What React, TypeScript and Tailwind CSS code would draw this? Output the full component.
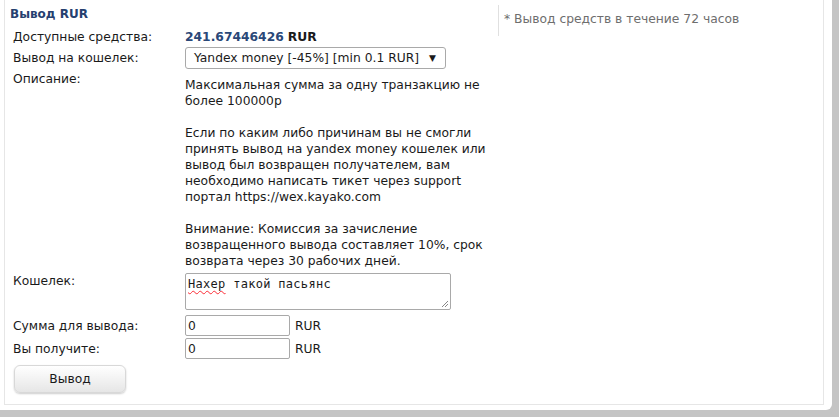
const font = { fontFamily: '"DejaVu Sans", Verdana, sans-serif' };

const Row = ({ label, children, className = "" }: { label: string; children: React.ReactNode; className?: string }) => (
  <div className={"flex " + className}>
    <div className="w-[172px] shrink-0">{label}</div>
    <div>{children}</div>
  </div>
);

export default function App() {
  return (
    <div className="w-[839px] h-[417px] bg-[#c4c4c4] overflow-hidden" style={font}>
      <div className="w-[832px] h-[410px] bg-white rounded-br-md">
        <div className="ml-[4px] w-[820px] h-[405px] border border-t-0 border-[#e6e6e6] flex text-[12.3px] leading-[16px] text-[#1a1a1a]">
          <div className="w-[493px] shrink-0">
            <h2 className="pl-[5px] pt-[6px] text-[12px] font-bold text-[#25406f] leading-[16px]">Вывод RUR</h2>
            <div className="pl-[8px]">
              <Row label="Доступные средства:" className="mt-[5px] h-[20px] items-center">
                <span className="font-bold text-[#2a4878]">241.67446426</span> <span className="font-bold">RUR</span>
              </Row>
              <Row label="Вывод на кошелек:" className="h-[22px] items-center">
                <div className="w-[261px] h-[22px] border border-[#a9a9a9] rounded-[3px] flex items-center justify-between pl-[8px] pr-[9px] whitespace-nowrap">
                  <span>Yandex money [-45%] [min 0.1 RUR]</span>
                  <span className="text-[9px]">▼</span>
                </div>
              </Row>
              <Row label="Описание:" className="mt-[2px]">
                <p className="w-[314px] mt-[6px]">
                  Максимальная сумма за одну транзакцию не более 100000р
                  <br />
                  <br />
                  Если по каким либо причинам вы не смогли принять вывод на yandex money кошелек или вывод был возвращен получателем, вам необходимо написать тикет через support портал https://wex.kayako.com
                  <br />
                  <br />
                  Внимание: Комиссия за зачисление возвращенного вывода составляет 10%, срок возврата через 30 рабочих дней.
                </p>
              </Row>
              <Row label="Кошелек:" className="mt-[4px]">
                <div className="relative w-[266px] h-[37px] border border-[#a9a9a9] rounded-[2px] px-[2px] pt-[3px] font-['DejaVu_Sans_Mono',monospace] text-[12px] leading-[14px] tracking-[0.3px]">
                  <span className="underline decoration-wavy decoration-red-500 decoration-1 underline-offset-2">Нахер</span> такой пасьянс
                  <svg className="absolute right-[1px] bottom-[1px]" width="8" height="8" viewBox="0 0 8 8">
                    <path d="M7 1L1 7M7 4L4 7" stroke="#888" strokeWidth="1" />
                  </svg>
                </div>
              </Row>
              <Row label="Сумма для вывода:" className="mt-[5px] h-[21px] items-center">
                <div className="flex items-center gap-[5px]">
                  <div className="w-[105px] h-[21px] border border-[#a9a9a9] rounded-[2px] pl-[2px] flex items-center">0</div>
                  <span>RUR</span>
                </div>
              </Row>
              <Row label="Вы получите:" className="mt-[2px] h-[21px] items-center">
                <div className="flex items-center gap-[5px]">
                  <div className="w-[105px] h-[21px] border border-[#a9a9a9] rounded-[2px] pl-[2px] flex items-center">0</div>
                  <span>RUR</span>
                </div>
              </Row>
              <button className="ml-[1px] mt-[6px] w-[112px] h-[28px] rounded-[6px] border border-[#d8d8d8] bg-gradient-to-b from-white to-[#e6e6e6] shadow-[0_1px_2px_rgba(0,0,0,0.2)] text-[12.3px] text-[#1a1a1a]">
                Вывод
              </button>
            </div>
          </div>
          <div className="mt-[5px] h-[31px] border-l border-[#e0e0e0] pl-[5px] pt-[6px] text-[#6e6e6e]">
            * Вывод средств в течение 72 часов
          </div>
        </div>
      </div>
    </div>
  );
}
